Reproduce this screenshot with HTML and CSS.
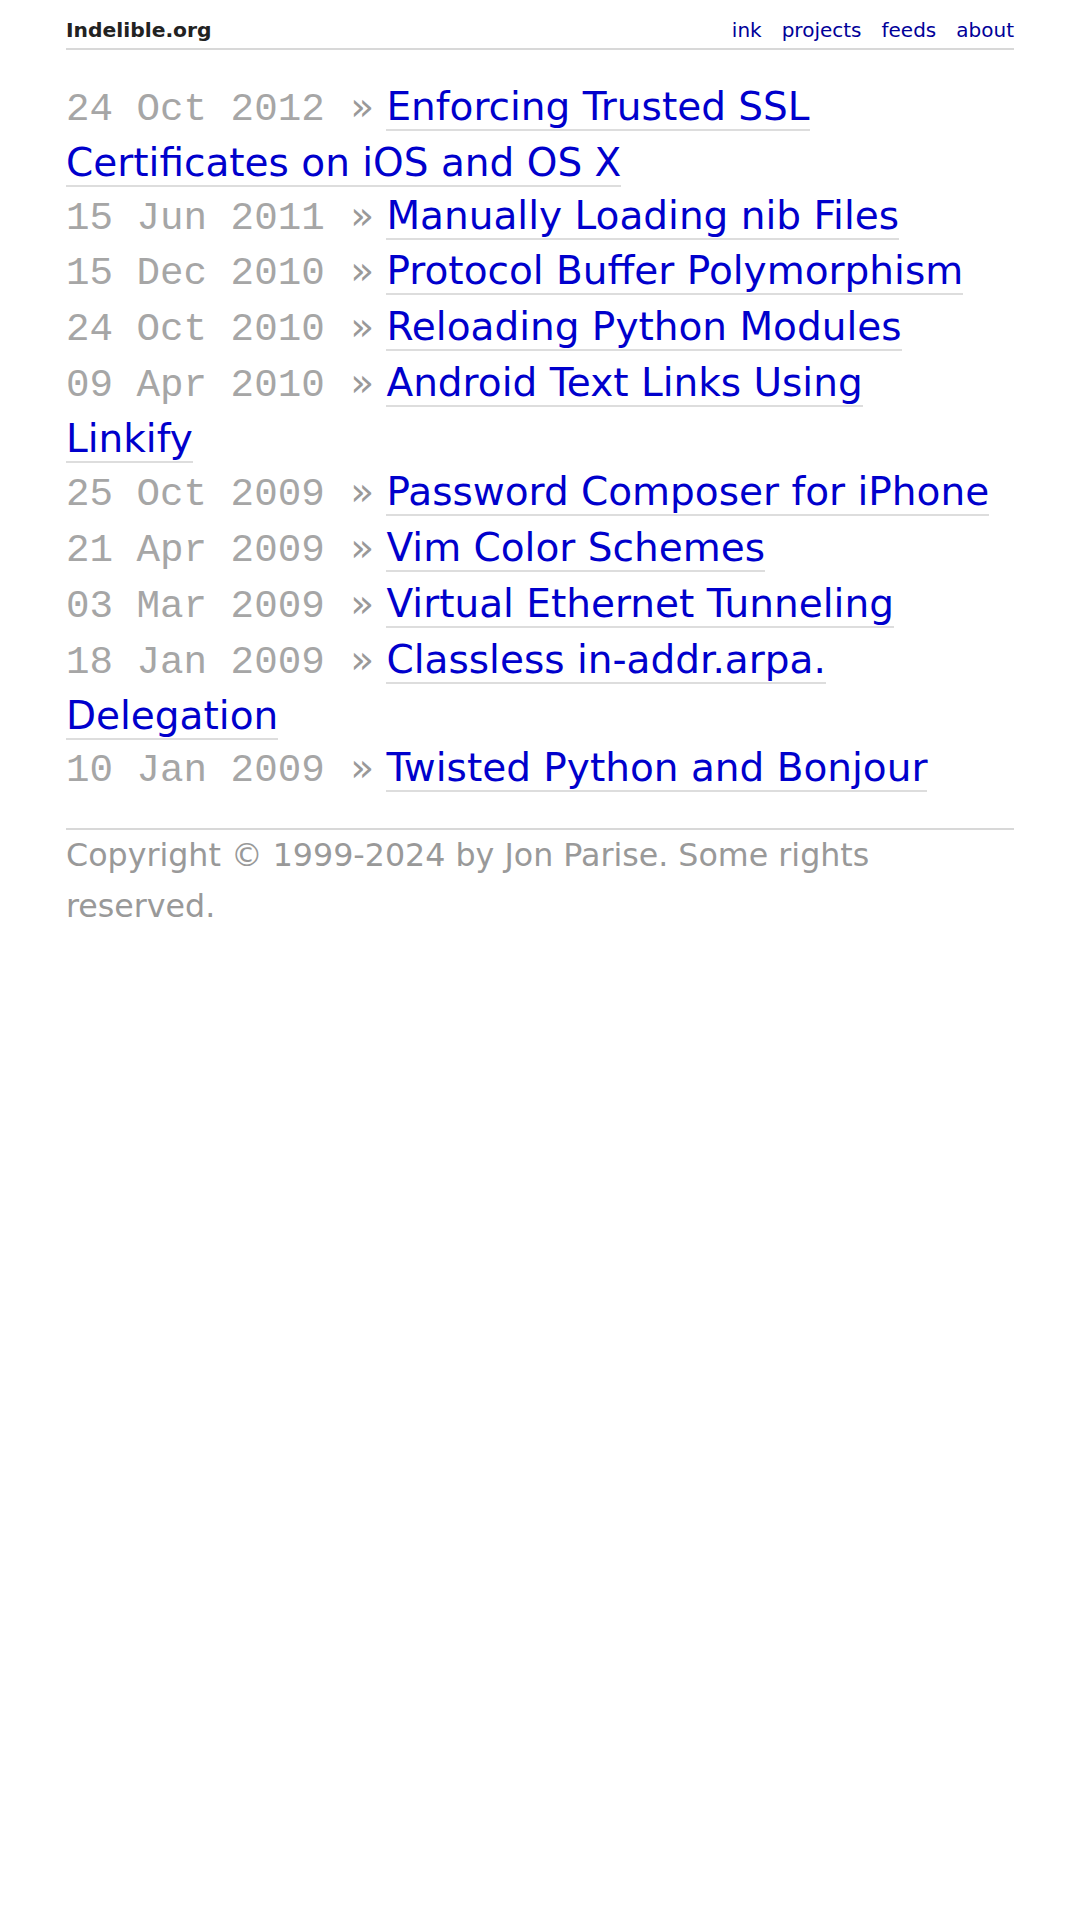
FILE: index.html
```html
<!DOCTYPE html>
<html lang="en">
  <head>
    <meta charset="UTF-8" />
    <meta name="viewport" content="width=device-width, initial-scale=1.0" />
    <title>Indelible.org</title>
    <link rel="stylesheet" href="styles.css">
  </head>
  <body>
    <div class="page">
      <header class="masthead">
        <a class="site-name" href="#">Indelible.org</a>
        <nav class="nav">
          <a href="#">ink</a>
          <a href="#">projects</a>
          <a href="#">feeds</a>
          <a href="#">about</a>
        </nav>
      </header>

      <ul class="posts">
        <li><span class="date">24 Oct 2012 </span>&raquo; <a href="#">Enforcing Trusted SSL Certificates on iOS and OS X</a></li>
        <li><span class="date">15 Jun 2011 </span>&raquo; <a href="#">Manually Loading nib Files</a></li>
        <li><span class="date">15 Dec 2010 </span>&raquo; <a href="#">Protocol Buffer Polymorphism</a></li>
        <li><span class="date">24 Oct 2010 </span>&raquo; <a href="#">Reloading Python Modules</a></li>
        <li><span class="date">09 Apr 2010 </span>&raquo; <a href="#">Android Text Links Using Linkify</a></li>
        <li><span class="date">25 Oct 2009 </span>&raquo; <a href="#">Password Composer for iPhone</a></li>
        <li><span class="date">21 Apr 2009 </span>&raquo; <a href="#">Vim Color Schemes</a></li>
        <li><span class="date">03 Mar 2009 </span>&raquo; <a href="#">Virtual Ethernet Tunneling</a></li>
        <li><span class="date">18 Jan 2009 </span>&raquo; <a href="#">Classless in-addr.arpa. Delegation</a></li>
        <li><span class="date">10 Jan 2009 </span>&raquo; <a href="#">Twisted Python and Bonjour</a></li>
      </ul>

      <footer class="footer">
        Copyright &copy; 1999-2024 by Jon Parise. Some rights reserved.
      </footer>
    </div>
  </body>
</html>
```

FILE: styles.css
```css
body {
  margin: 0;
  background: #fff;
  color: #222;
  font-family: "DejaVu Sans", Verdana, sans-serif;
}

.page {
  width: 948px;
  margin: 0 auto;
}

.masthead {
  display: flex;
  align-items: baseline;
  justify-content: space-between;
  padding: 18px 0 6px;
  border-bottom: 2px solid #d8d8d8;
  font-size: 20px;
}

.site-name {
  font-size: 20.3px;
  font-weight: bold;
  color: #222;
  text-decoration: none;
}

.nav {
  display: flex;
  gap: 20px;
}

.nav a {
  color: #000099;
  text-decoration: none;
}

.posts {
  list-style: none;
  margin: 31px 0 0;
  padding: 0 14px 0 0;
  font-size: 39px;
  line-height: 1.35;
  color: #999;
}

.date {
  margin-right: 2px;
  font-family: "Courier New", "Liberation Mono", monospace;
  font-size: 39.2px;
  color: #a6a6a6;
}

.posts a {
  color: #0000cc;
  text-decoration: none;
  border-bottom: 2px solid #ddd;
}

.footer {
  margin-top: 30px;
  border-top: 2px solid #d8d8d8;
  font-size: 31.7px;
  line-height: 51px;
  color: #999;
}
```
